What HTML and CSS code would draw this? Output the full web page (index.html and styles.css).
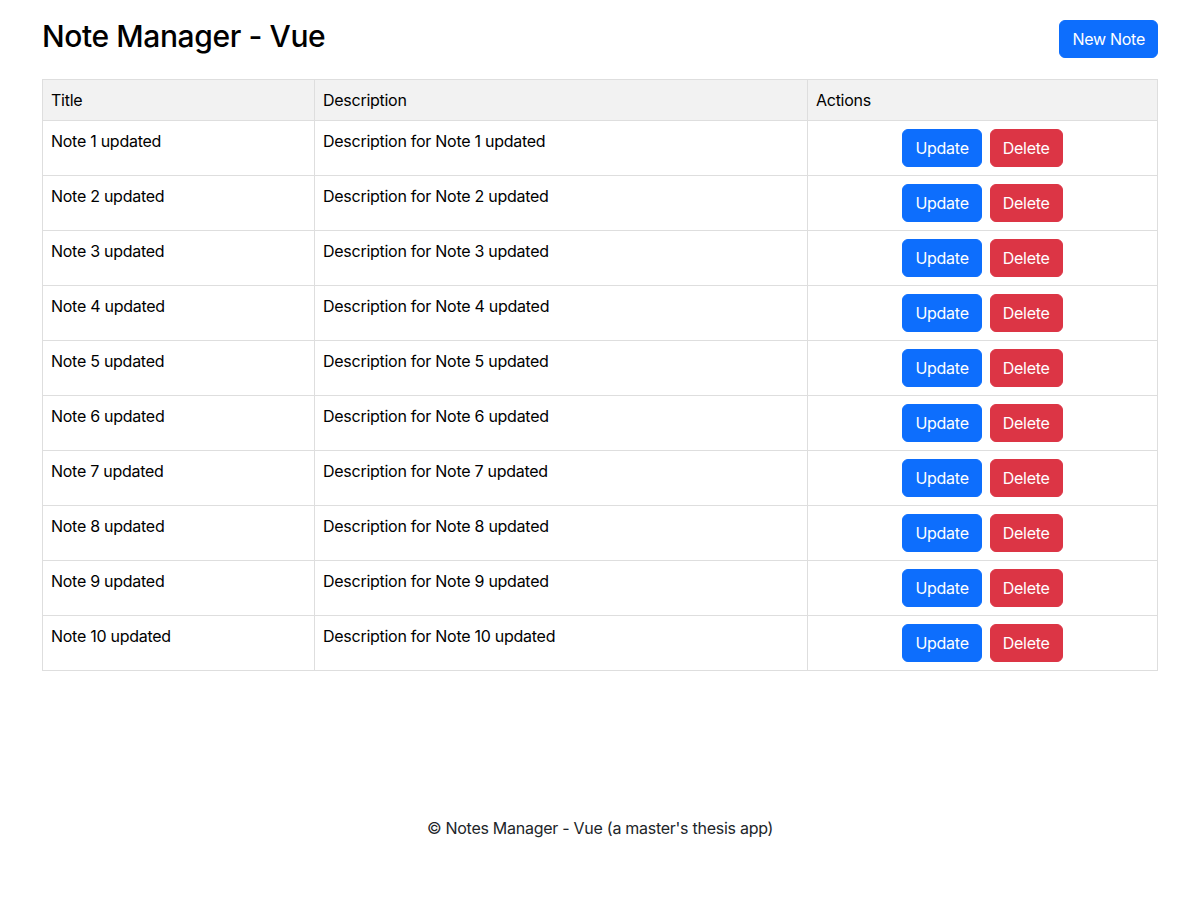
FILE: index.html
```html
<!DOCTYPE html>
<html lang="en">
<head>
<meta charset="utf-8">
<title>Note Manager - Vue</title>
<link rel="stylesheet" href="styles.css">
</head>
<body>
<div class="container">
  <header class="page-header">
    <h1 class="title">Note Manager - Vue</h1>
    <button class="btn btn-primary">New Note</button>
  </header>
  <table class="notes">
    <thead>
      <tr><th class="col-title">Title</th><th class="col-desc">Description</th><th class="col-actions">Actions</th></tr>
    </thead>
    <tbody>
      <tr><td>Note 1 updated</td><td>Description for Note 1 updated</td><td class="actions"><div class="btns"><button class="btn btn-primary">Update</button><button class="btn btn-danger">Delete</button></div></td></tr>
      <tr><td>Note 2 updated</td><td>Description for Note 2 updated</td><td class="actions"><div class="btns"><button class="btn btn-primary">Update</button><button class="btn btn-danger">Delete</button></div></td></tr>
      <tr><td>Note 3 updated</td><td>Description for Note 3 updated</td><td class="actions"><div class="btns"><button class="btn btn-primary">Update</button><button class="btn btn-danger">Delete</button></div></td></tr>
      <tr><td>Note 4 updated</td><td>Description for Note 4 updated</td><td class="actions"><div class="btns"><button class="btn btn-primary">Update</button><button class="btn btn-danger">Delete</button></div></td></tr>
      <tr><td>Note 5 updated</td><td>Description for Note 5 updated</td><td class="actions"><div class="btns"><button class="btn btn-primary">Update</button><button class="btn btn-danger">Delete</button></div></td></tr>
      <tr><td>Note 6 updated</td><td>Description for Note 6 updated</td><td class="actions"><div class="btns"><button class="btn btn-primary">Update</button><button class="btn btn-danger">Delete</button></div></td></tr>
      <tr><td>Note 7 updated</td><td>Description for Note 7 updated</td><td class="actions"><div class="btns"><button class="btn btn-primary">Update</button><button class="btn btn-danger">Delete</button></div></td></tr>
      <tr><td>Note 8 updated</td><td>Description for Note 8 updated</td><td class="actions"><div class="btns"><button class="btn btn-primary">Update</button><button class="btn btn-danger">Delete</button></div></td></tr>
      <tr><td>Note 9 updated</td><td>Description for Note 9 updated</td><td class="actions"><div class="btns"><button class="btn btn-primary">Update</button><button class="btn btn-danger">Delete</button></div></td></tr>
      <tr><td>Note 10 updated</td><td>Description for Note 10 updated</td><td class="actions"><div class="btns"><button class="btn btn-primary">Update</button><button class="btn btn-danger">Delete</button></div></td></tr>
    </tbody>
  </table>
  <footer class="footer">© Notes Manager - Vue (a master's thesis app)</footer>
</div>
</body>
</html>
```
FILE: styles.css
```css
* { box-sizing: border-box; }
html, body { margin: 0; padding: 0; background: #fff; }
body {
  font-family: Inter, "Noto Sans", "Liberation Sans", sans-serif;
  font-size: 16px;
  line-height: 1.5;
  letter-spacing: -0.27px;
  color: #000;
}
.container { padding: 20px 42px 0; }
.page-header {
  display: flex;
  justify-content: space-between;
  align-items: center;
  margin-bottom: 21px;
}
.title {
  align-self: flex-start;
  margin: -2px 0 0;
  font-size: 30px;
  font-weight: 500;
  line-height: 1.2;
  letter-spacing: -0.4px;
  color: #000;
}
.btn {
  display: inline-block;
  font-family: inherit;
  font-size: 16px;
  line-height: 24px;
  letter-spacing: -0.27px;
  padding: 6px 12px;
  border: 1px solid transparent;
  border-radius: 6px;
  color: #fff;
  cursor: pointer;
  font-weight: 400;
}
.btn-primary { background: #0d6efd; border-color: #0d6efd; }
.btn-danger { background: #dc3545; border-color: #dc3545; }
.notes {
  width: 100%;
  border-collapse: collapse;
  table-layout: fixed;
}
.notes th, .notes td {
  border: 1px solid #dedede;
  padding: 8px;
  text-align: left;
  vertical-align: top;
  font-weight: 400;
}
.notes thead th { background: #f2f2f2; }
.col-title { width: 272px; }
.col-desc { width: 493px; }
.btns {
  display: flex;
  justify-content: center;
  gap: 8px;
}
.footer {
  margin-top: 145px;
  text-align: center;
  color: #212529;
}
```
